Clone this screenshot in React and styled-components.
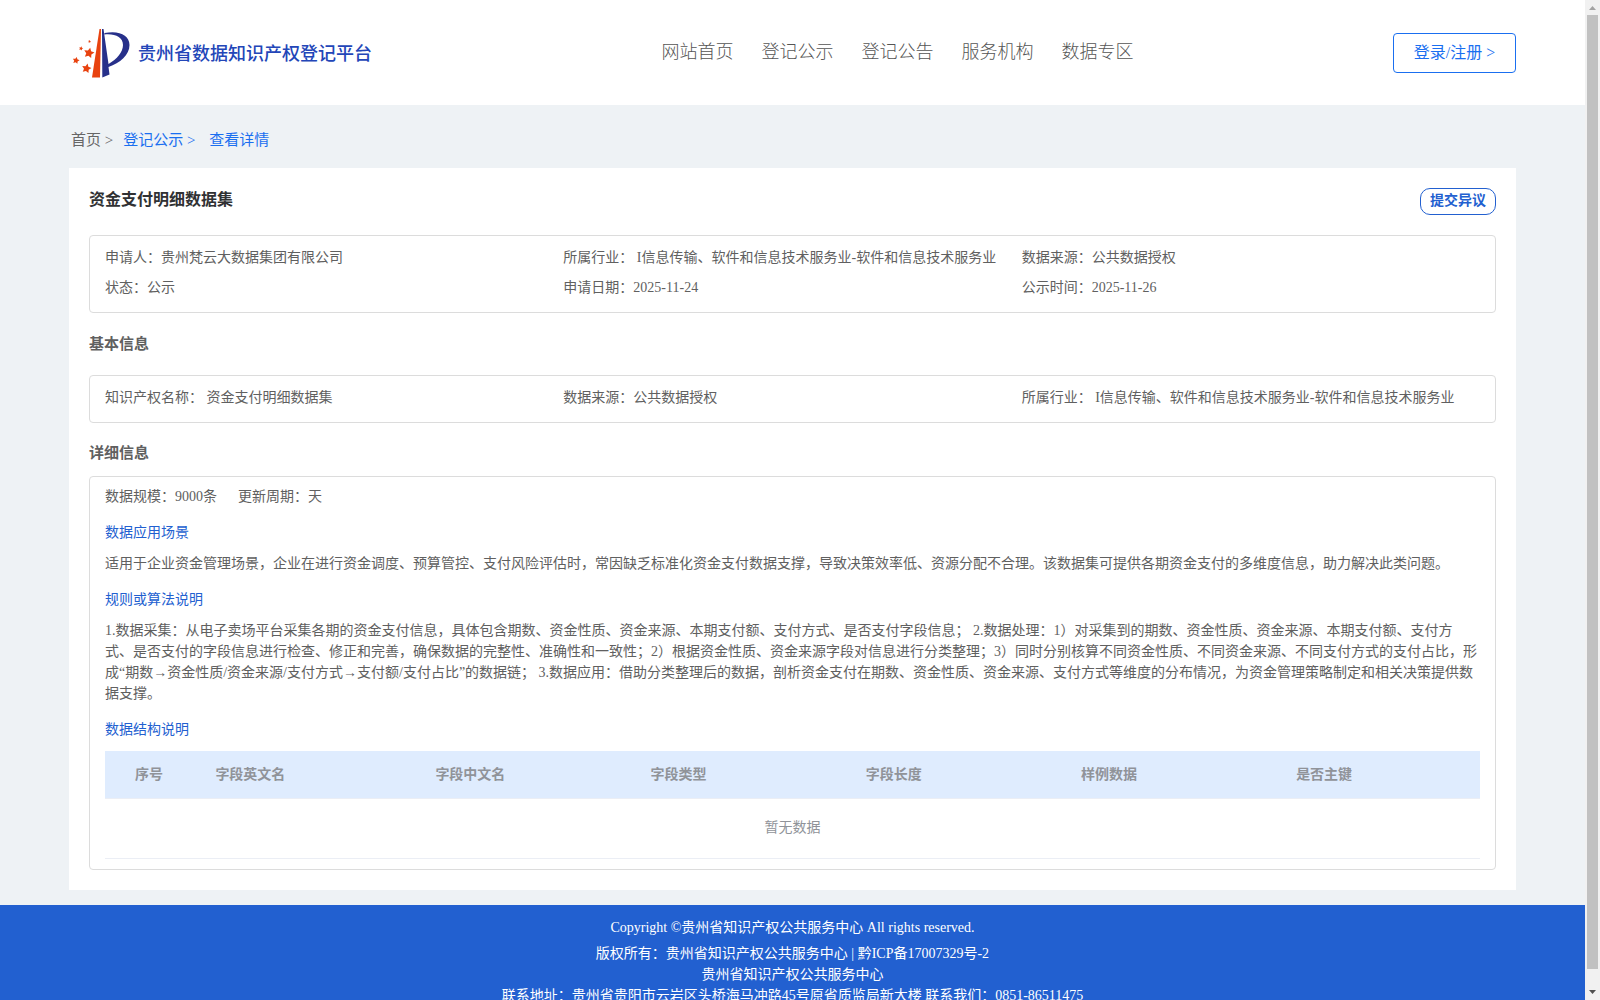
import React from "react";
import styled, { createGlobalStyle, css } from "styled-components";

const GlobalStyle = createGlobalStyle`
  * { box-sizing: border-box; }
  body {
    margin: 0;
    background: #eef2f5;
    color: #606060;
    font-family: "Liberation Serif", "Noto Sans CJK SC", serif;
    font-size: 14px;
    text-spacing-trim: space-all;
  }
`;

const Window = styled.div`
  display: grid;
  grid-template-columns: minmax(0, 1fr) 15px;
  height: 100vh;
  overflow: hidden;
`;

const Page = styled.div`
  overflow: hidden;
`;

const Header = styled.header`
  display: flex;
  align-items: center;
  justify-content: space-between;
  height: 105px;
  padding: 0 69px;
  background: #fff;
`;

const Brand = styled.a`
  display: flex;
  align-items: center;
  gap: 8px;
  color: #2346b8;
  font-size: 18px;
  font-weight: 500;
  line-height: 26px;
  text-decoration: none;
`;

const BrandName = styled.span`
  padding-top: 2px;
`;

const Nav = styled.nav`
  display: flex;
  gap: 28px;
  padding: 0 0 2px 30px;
`;

const NavLink = styled.a`
  color: #555;
  font-size: 18px;
  font-weight: 300;
  line-height: 26px;
  text-decoration: none;
`;

const LoginButton = styled.button`
  width: 123px;
  height: 40px;
  padding: 0 0 3px;
  border: 1px solid #1a6ff0;
  border-radius: 4px;
  background: #fff;
  color: #1a6ff0;
  font-family: inherit;
  font-size: 16px;
  font-weight: 400;
`;

const Breadcrumb = styled.nav`
  display: flex;
  gap: 10px;
  padding: 24px 71px 17px;
  font-size: 15px;
  line-height: 22px;
`;

const Crumb = styled.a`
  color: ${(p) => (p.$active ? "#1a6ff0" : "#666")};
  text-decoration: none;
  white-space: pre;
`;

const Card = styled.main`
  margin: 0 69px 15px;
  padding: 20px;
  background: #fff;
`;

const CardHead = styled.div`
  display: flex;
  justify-content: space-between;
  align-items: flex-start;
  margin-bottom: 20px;
`;

const Title = styled.h1`
  margin: 0;
  color: #303133;
  font-size: 16px;
  font-weight: 700;
  line-height: 24px;
`;

const ObjectionButton = styled.button`
  height: 27px;
  padding: 0 9px 2px;
  border: 1px solid #2260d0;
  border-radius: 10px;
  background: #fff;
  color: #2260d0;
  font-family: inherit;
  font-size: 14px;
  font-weight: 700;
  line-height: 22px;
`;

const SectionTitle = styled.h2`
  margin: ${(p) => (p.$tight ? "20px 0 12px" : "20px 0")};
  font-size: 15px;
  font-weight: 700;
  line-height: ${(p) => (p.$tight ? "21px" : "22px")};
`;

const panel = css`
  border: 1px solid #dcdcdc;
  border-radius: 4px;
`;

const InfoGrid = styled.div`
  ${panel}
  display: grid;
  grid-template-columns: repeat(3, minmax(0, 1fr));
  padding: 7px 15px 9px;
  line-height: 30px;
`;

const Detail = styled.section`
  ${panel}
  padding: 9px 15px 10px;
  line-height: 21px;
`;

const Summary = styled.div`
  display: flex;
  gap: 21px;
`;

const SubTitle = styled.h3`
  margin: 15px 0 10px;
  color: #2260d0;
  font-size: 14px;
  font-weight: 400;
  line-height: 21px;
`;

const Paragraph = styled.p`
  margin: 0;
`;

const Table = styled.table`
  width: 100%;
  margin-top: 11px;
  border-collapse: collapse;
  table-layout: fixed;
  color: #909399;
  font-size: 14px;
`;

const HeadCell = styled.th`
  width: ${(p) => p.$width};
  height: 47px;
  padding: 0 10px 0 ${(p) => (p.$first ? "30px" : "10px")};
  border-bottom: 1px solid #ebeef5;
  background: #dfecfe;
  font-weight: 700;
  text-align: left;
`;

const EmptyCell = styled.td`
  height: 60px;
  padding: 0 0 2px;
  border-bottom: 1px solid #ebeef5;
  text-align: center;
`;

const Footer = styled.footer`
  padding: 12px 0;
  background: #2260d0;
  color: #fff;
  line-height: 21px;
  text-align: center;
`;

const FooterLine = styled.p`
  margin: 0 0 ${(p) => (p.$spaced ? "5px" : "0")};
`;

const FooterLink = styled.a`
  color: inherit;
  text-decoration: none;
`;

const Scrollbar = styled.div`
  display: flex;
  flex-direction: column;
  align-items: center;
  background: #f1f1f1;
`;

const Thumb = styled.div`
  flex: 1;
  width: 11px;
  margin-bottom: 16px;
  background: #c1c1c1;
`;

const Arrow = styled.svg`
  display: block;
  width: 15px;
  height: 15px;
`;

const Star = ({ x, y, r }) => {
  const points = Array.from({ length: 10 }, (_, i) => {
    const a = -1.35 + (i * Math.PI) / 5;
    const d = i % 2 ? r * 0.5 : r;
    return `${x + d * Math.cos(a)},${y + d * Math.sin(a)}`;
  }).join(" ");
  return <polygon points={points} fill="#e8420f" />;
};

const Logo = () => (
  <svg width="61" height="50" viewBox="0 0 61 50" aria-hidden="true">
    <path d="M30.500 1 L32 1 L31 49.500 L23 49.500 Z" fill="#e8420f" />
    <path
      d="M33 1 L34.500 1 L39.500 36 C48 31 54 24 54 17 C54 9 46 5.500 35.500 6.500 L35.500 5 C50 2 60.500 7 60.500 17 C60.500 27 51 35 39.500 39 L40.500 46.500 L33.300 49.500 Z"
      fill="#27308a"
    />
    <Star x={20} y={25} r={5.5} />
    <Star x={17.5} y={40.500} r={5} />
    <Star x={7} y={32.500} r={3.6} />
    <Star x={12} y={20.500} r={2.2} />
    <Star x={20.5} y={13.500} r={1.5} />
  </svg>
);

const NAV = ["网站首页", "登记公示", "登记公告", "服务机构", "数据专区"];

const APPLICATION = [
  "申请人：贵州梵云大数据集团有限公司",
  "所属行业： I信息传输、软件和信息技术服务业-软件和信息技术服务业",
  "数据来源：公共数据授权",
  "状态：公示",
  "申请日期：2025-11-24",
  "公示时间：2025-11-26",
];

const BASIC = [
  "知识产权名称： 资金支付明细数据集",
  "数据来源：公共数据授权",
  "所属行业： I信息传输、软件和信息技术服务业-软件和信息技术服务业",
];

const COLUMNS = [
  ["序号", "7.3%"],
  ["字段英文名", "16%"],
  ["字段中文名", "15.65%"],
  ["字段类型", "15.65%"],
  ["字段长度", "15.65%"],
  ["样例数据", "15.65%"],
  ["是否主键", "auto"],
];

export default function App() {
  return (
    <>
      <GlobalStyle />
      <Window>
        <Page>
          <Header>
            <Brand href="#">
              <Logo />
              <BrandName>贵州省数据知识产权登记平台</BrandName>
            </Brand>
            <Nav>
              {NAV.map((label) => (
                <NavLink href="#" key={label}>{label}</NavLink>
              ))}
            </Nav>
            <LoginButton type="button">登录/注册 &gt;</LoginButton>
          </Header>
          <Breadcrumb>
            <Crumb href="#">{"首页 >"}</Crumb>
            <Crumb href="#" $active>{"登记公示 > "}</Crumb>
            <Crumb href="#" $active>查看详情</Crumb>
          </Breadcrumb>
          <Card>
            <CardHead>
              <Title>资金支付明细数据集</Title>
              <ObjectionButton type="button">提交异议</ObjectionButton>
            </CardHead>
            <InfoGrid>
              {APPLICATION.map((text) => <div key={text}>{text}</div>)}
            </InfoGrid>
            <SectionTitle>基本信息</SectionTitle>
            <InfoGrid>
              {BASIC.map((text) => <div key={text}>{text}</div>)}
            </InfoGrid>
            <SectionTitle $tight>详细信息</SectionTitle>
            <Detail>
              <Summary>
                <span>数据规模：9000条</span>
                <span>更新周期：天</span>
              </Summary>
              <SubTitle>数据应用场景</SubTitle>
              <Paragraph>
                适用于企业资金管理场景，企业在进行资金调度、预算管控、支付风险评估时，常因缺乏标准化资金支付数据支撑，导致决策效率低、资源分配不合理。该数据集可提供各期资金支付的多维度信息，助力解决此类问题。
              </Paragraph>
              <SubTitle>规则或算法说明</SubTitle>
              <Paragraph>
                1.数据采集：从电子卖场平台采集各期的资金支付信息，具体包含期数、资金性质、资金来源、本期支付额、支付方式、是否支付字段信息； 2.数据处理：1）对采集到的期数、资金性质、资金来源、本期支付额、支付方式、是否支付的字段信息进行检查、修正和完善，确保数据的完整性、准确性和一致性；2）根据资金性质、资金来源字段对信息进行分类整理；3）同时分别核算不同资金性质、不同资金来源、不同支付方式的支付占比，形成“期数→资金性质/资金来源/支付方式→支付额/支付占比”的数据链； 3.数据应用：借助分类整理后的数据，剖析资金支付在期数、资金性质、资金来源、支付方式等维度的分布情况，为资金管理策略制定和相关决策提供数据支撑。
              </Paragraph>
              <SubTitle>数据结构说明</SubTitle>
              <Table>
                <thead>
                  <tr>
                    {COLUMNS.map(([label, width], i) => (
                      <HeadCell key={label} $width={width} $first={i === 0}>{label}</HeadCell>
                    ))}
                  </tr>
                </thead>
                <tbody>
                  <tr>
                    <EmptyCell colSpan={COLUMNS.length}>暂无数据</EmptyCell>
                  </tr>
                </tbody>
              </Table>
            </Detail>
          </Card>
          <Footer>
            <FooterLine $spaced>Copyright ©贵州省知识产权公共服务中心 All rights reserved.</FooterLine>
            <FooterLine>
              版权所有：贵州省知识产权公共服务中心 | <FooterLink href="#">黔ICP备17007329号-2</FooterLink>
            </FooterLine>
            <FooterLine>贵州省知识产权公共服务中心</FooterLine>
            <FooterLine>联系地址：贵州省贵阳市云岩区头桥海马冲路45号原省质监局新大楼 联系我们：0851-86511475</FooterLine>
          </Footer>
        </Page>
        <Scrollbar aria-hidden="true">
          <Arrow viewBox="0 0 15 15"><path d="M4 10 L11 10 L7.500 6 Z" fill="#a3a3a3" /></Arrow>
          <Thumb />
          <Arrow viewBox="0 0 15 15"><path d="M4 5 L11 5 L7.500 9 Z" fill="#505050" /></Arrow>
        </Scrollbar>
      </Window>
    </>
  );
}
